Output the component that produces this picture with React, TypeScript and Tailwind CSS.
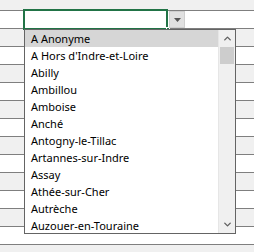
import { ChevronDown, ChevronUp } from 'lucide-react'

const communes = [
  'A Anonyme',
  "A Hors d'Indre-et-Loire",
  'Abilly',
  'Ambillou',
  'Amboise',
  'Anché',
  'Antogny-le-Tillac',
  'Artannes-sur-Indre',
  'Assay',
  'Athée-sur-Cher',
  'Autrèche',
  'Auzouer-en-Touraine',
]

export default function App() {
  // sheet rows: first one is cut off at the top
  const rows = Array.from({ length: 13 }, (_, i) => i)

  return (
    <div className="relative w-[254px] h-[252px] overflow-hidden bg-white font-['Noto_Sans',sans-serif]">
      {/* Grid */}
      <div className="flex flex-col">
        <div className="h-[11px] bg-[#f0f0f0] border-b border-[#7f7f7f]" />
        {rows.map(i => (
          <div
            key={i}
            className={`h-[18px] border-b border-[#7f7f7f] ${i % 2 === 0 ? 'bg-white' : 'bg-[#f0f0f0]'}`}
          />
        ))}
        <div className="h-[10px] bg-[#f0f0f0]" />
      </div>

      {/* Active cell */}
      <div className="absolute left-[23px] top-[9px] w-[145px] h-[21px] border-2 border-[#217346]" />
      <div className="absolute left-[166px] top-[27px] w-[4px] h-[4px] bg-[#217346] border border-white" />

      {/* Dropdown button */}
      <div className="absolute left-[169px] top-[11px] w-[16px] h-[17px] bg-[#e1e1e1] border border-[#cfcfcf] flex items-center justify-center">
        <svg width="7" height="4" viewBox="0 0 7 4">
          <path d="M0 0h7L3.5 4z" fill="#555" />
        </svg>
      </div>

      {/* List */}
      <div className="absolute left-[24px] top-[29px] w-[212px] h-[205px] bg-white border border-[#646464] flex">
        <ul className="flex-1 flex flex-col">
          {communes.map((c, i) => (
            <li
              key={c}
              className={`h-[17px] pl-[6px] text-[11px] leading-[17px] text-black whitespace-nowrap ${i === 0 ? 'bg-[#d6d6d6]' : ''}`}
            >
              {c}
            </li>
          ))}
        </ul>
        <div className="w-[17px] bg-[#f0f0f0] border-l border-[#e6e6e6] flex flex-col">
          <div className="h-[17px] flex items-center justify-center text-[#606060]">
            <ChevronUp size={11} strokeWidth={3} />
          </div>
          <div className="h-[17px] mx-[1px] bg-[#cdcdcd]" />
          <div className="flex-1" />
          <div className="h-[17px] flex items-center justify-center text-[#606060]">
            <ChevronDown size={11} strokeWidth={3} />
          </div>
        </div>
      </div>
    </div>
  )
}
